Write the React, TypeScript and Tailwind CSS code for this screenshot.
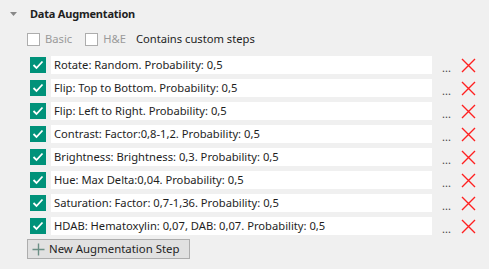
import React from "react";

const steps = [
  "Rotate: Random. Probability: 0,5",
  "Flip: Top to Bottom. Probability: 0,5",
  "Flip: Left to Right. Probability: 0,5",
  "Contrast: Factor:0,8-1,2. Probability: 0,5",
  "Brightness: Brightness: 0,3. Probability: 0,5",
  "Hue: Max Delta:0,04. Probability: 0,5",
  "Saturation: Factor: 0,7-1,36. Probability: 0,5",
  "HDAB: Hematoxylin: 0,07, DAB: 0,07. Probability: 0,5",
];

function Check() {
  return (
    <div className="w-[16px] h-[16px] bg-[#00927a] flex items-center justify-center shrink-0">
      <svg width="12" height="10" viewBox="0 0 12 10">
        <path d="M1.5 5 L4.5 8 L10.5 1.5" fill="none" stroke="white" strokeWidth="1.8" />
      </svg>
    </div>
  );
}

function RedX() {
  return (
    <svg width="15" height="15" viewBox="0 0 15 15" className="shrink-0">
      <path d="M1 1 L14 14 M14 1 L1 14" stroke="#ff2020" strokeWidth="1.4" fill="none" />
    </svg>
  );
}

export default function App() {
  return (
    <div
      className="w-[489px] h-[269px] bg-[#f0f0f0] text-[11.2px] text-[#1e1e1e] overflow-hidden"
      style={{ fontFamily: '"Noto Sans", "Open Sans", sans-serif' }}
    >
      <div className="flex items-center h-[20px] mt-[4px] pl-[10px]">
        <svg width="7" height="4" viewBox="0 0 7 4" className="mr-[13px]">
          <path d="M0 0 L7 0 L3.5 4 Z" fill="#888" />
        </svg>
        <span className="font-bold text-[11px] tracking-[-0.2px] text-[#1e1e1e]">Data Augmentation</span>
      </div>
      <div className="flex items-center h-[20px] mt-[5px] pl-[27px]">
        <div className="w-[13px] h-[13px] border border-[#adadad] bg-white mr-[5px]" />
        <span className="text-[#9a9a9a] mr-[13px]">Basic</span>
        <div className="w-[13px] h-[13px] border border-[#adadad] bg-white mr-[5px]" />
        <span className="text-[#9a9a9a] mr-[10px]">H&amp;E</span>
        <span>Contains custom steps</span>
      </div>
      <div className="flex flex-col gap-[5px] mt-[7px] pl-[30px]">
        {steps.map((s) => (
          <div key={s} className="flex items-center h-[18px]">
            <Check />
            <div className="ml-[5px] w-[381px] h-[18px] bg-white flex items-center pl-[3px] text-[#1e1e1e] whitespace-nowrap overflow-hidden">
              {s}
            </div>
            <div className="w-[29px] flex items-end justify-center h-[18px] pb-[1px] text-[11px] leading-none text-[#444]">
              ...
            </div>
            <RedX />
          </div>
        ))}
      </div>
      <div className="ml-[27px] mt-[4px] w-[163px] h-[20px] border border-[#adadad] bg-[#e1e1e1] flex items-center pl-[4px]">
        <svg width="13" height="13" viewBox="0 0 13 13" className="mr-[4px]">
          <path d="M6.5 0.5 V12.5 M0.5 6.5 H12.5" stroke="#6b8f85" strokeWidth="1.4" />
        </svg>
        <span className="text-[#1e1e1e] text-[11.4px]">New Augmentation Step</span>
      </div>
    </div>
  );
}
